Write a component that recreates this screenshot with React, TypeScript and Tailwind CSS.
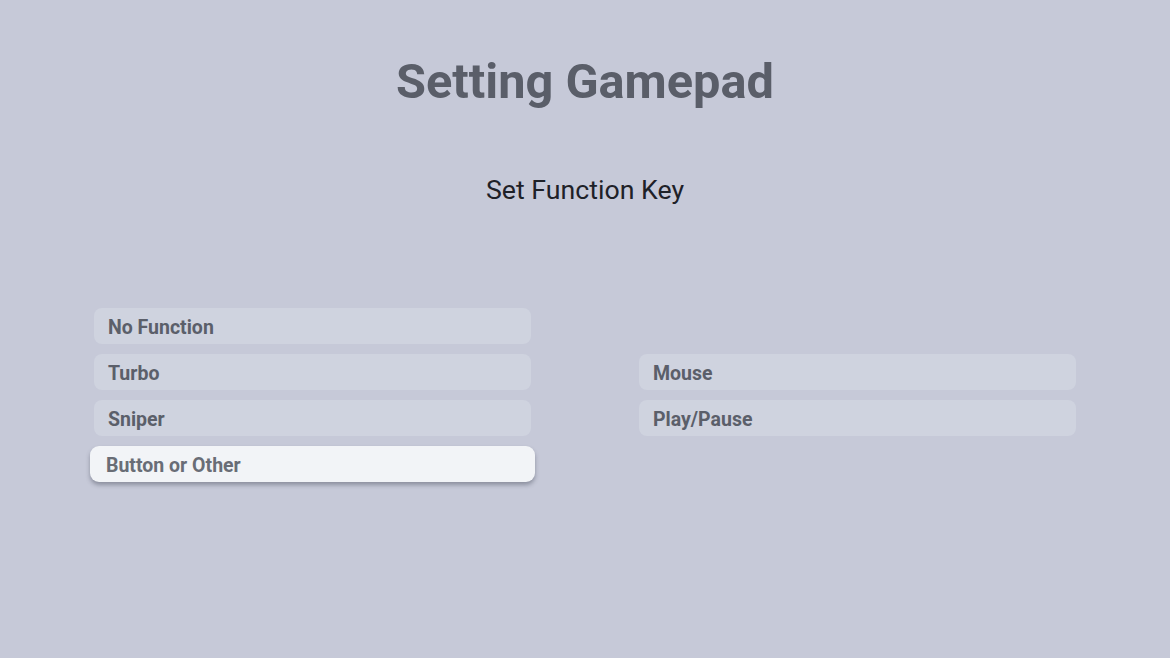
import React from "react";

const left = ["No Function", "Turbo", "Sniper", "Button or Other"];
const right = ["", "Mouse", "Play/Pause"];

function Item({ label, selected }: { label: string; selected?: boolean }) {
  if (!label) return <div className="h-9" />;
  if (selected) {
    return (
      <div className="-mx-[4px] h-9 rounded-[9px] bg-[#f2f4f7] pl-[16px] pt-[3px] flex items-center text-[19.5px] font-bold text-[#696d76] shadow-[0_3px_4px_rgba(70,75,90,0.45)]">
        {label}
      </div>
    );
  }
  return (
    <div className="h-9 rounded-[8px] bg-[#cfd3df] pl-[14px] pt-[3px] flex items-center text-[19.5px] font-bold text-[#5b5f6a]">
      {label}
    </div>
  );
}

export default function App() {
  return (
    <div
      className="w-[1170px] h-[658px] bg-[#c6c9d8] flex flex-col items-center overflow-hidden"
      style={{ fontFamily: "Roboto, 'Liberation Sans', sans-serif" }}
    >
      <h1 className="mt-[53px] text-[48.7px] leading-[58px] font-bold text-[#5a5e69]">Setting Gamepad</h1>
      <div className="mt-[63px] text-[26.7px] leading-[32px] text-[#1e2128]">Set Function Key</div>
      <div className="mt-[102px] w-full px-[94px] grid grid-cols-2 gap-x-[108px]">
        <div className="flex flex-col gap-[10px]">
          {left.map((l, i) => (
            <Item key={l} label={l} selected={i === 3} />
          ))}
        </div>
        <div className="flex flex-col gap-[10px]">
          {right.map((l, i) => (
            <Item key={i} label={l} />
          ))}
        </div>
      </div>
    </div>
  );
}
